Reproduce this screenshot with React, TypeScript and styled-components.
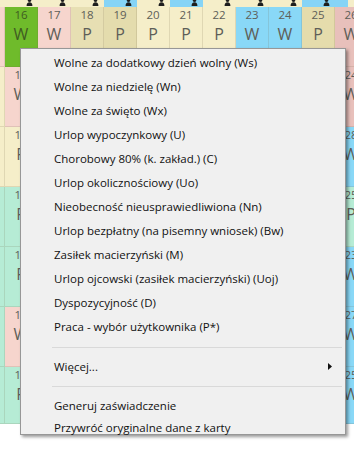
import React from 'react';
import styled, { createGlobalStyle } from 'styled-components';

const Global = createGlobalStyle`
  html, body { margin: 0; padding: 0; background: #ffffff; }
  body { width: 354px; height: 455px; overflow: hidden; font-family: "Open Sans", "Noto Sans", sans-serif; }
`;

const Stage = styled.div`
  position: relative;
  width: 354px;
  height: 455px;
  overflow: hidden;
  background: #ffffff;
`;

const Grid = styled.div`
  display: grid;
  grid-template-columns: 5px repeat(11, 33px);
  grid-template-rows: 7px repeat(6, 60px) 57px;
  width: 368px;
`;

const TopCell = styled.div<{ $bg: string }>`
  background: ${(p) => p.$bg};
  display: flex;
  justify-content: flex-end;
  align-items: flex-start;
  padding-right: 5px;
  overflow: hidden;
  box-sizing: border-box;
`;

const PersonIcon = styled.svg`
  width: 7px;
  height: 8px;
  margin-top: -2px;
  flex: none;
`;

const Cell = styled.div<{ $bg: string; $fg?: string }>`
  background: ${(p) => p.$bg};
  color: ${(p) => p.$fg ?? '#5e5e58'};
  border-right: 1px solid rgba(110, 100, 70, 0.16);
  border-bottom: 1px solid rgba(110, 100, 70, 0.16);
  box-sizing: border-box;
  display: flex;
  flex-direction: column;
  align-items: center;
  padding-top: 0;
  overflow: hidden;
  font-family: "Open Sans", "Noto Sans", sans-serif;
`;

const DayNum = styled.span`
  font-size: 11.5px;
  line-height: 16px;
  height: 16px;
`;

const DayCode = styled.span`
  font-size: 16px;
  line-height: 22px;
  height: 22px;
`;

const Menu = styled.div`
  position: absolute;
  left: 20px;
  top: 48px;
  width: 326px;
  box-sizing: border-box;
  background: #f0f0f0;
  border: 1px solid #979797;
  box-shadow: 2px 2px 3px rgba(0, 0, 0, 0.4);
  padding: 2px 2px 0 2px;
  font-family: "Open Sans", "Noto Sans", sans-serif;
  font-size: 11.5px;
  color: #111;
`;

const Item = styled.div<{ $h?: number }>`
  height: ${(p) => p.$h ?? 24}px;
  display: flex;
  align-items: flex-start;
  padding-left: 31px;
  padding-right: 11px;
  white-space: nowrap;
`;

const Label = styled.span`
  flex: 1;
  line-height: 24px;
`;

const Separator = styled.div<{ $h?: number }>`
  height: ${(p) => p.$h ?? 16}px;
  display: flex;
  align-items: center;
  padding-left: 29px;
  padding-right: 1px;
  &::after {
    content: '';
    flex: 1;
    height: 1px;
    background: #d9d9d9;
  }
`;

const Arrow = styled.svg`
  width: 4px;
  height: 7px;
  flex: none;
  margin-top: 8px;
`;

const PALE = '#f5eec9';
const TAN = '#e7dfb3';
const PINK = '#f6d5cd';
const PINK2 = '#e8c0bb';
const GREEN = '#6fbb2b';
const BLUE = '#89d8f7';
const TEAL = '#b6ecd5';
const TOPBLUE = '#86d4f6';

type Day = { n: string; c: string; bg: string; fg?: string };

const topStrip: { bg: string; icon: boolean }[] = [
  { bg: PALE, icon: false },
  { bg: PALE, icon: true },
  { bg: PALE, icon: true },
  { bg: PALE, icon: true },
  { bg: TOPBLUE, icon: true },
  { bg: PALE, icon: true },
  { bg: TOPBLUE, icon: true },
  { bg: PALE, icon: true },
  { bg: PALE, icon: true },
  { bg: PALE, icon: true },
  { bg: TOPBLUE, icon: true },
  { bg: `linear-gradient(to right, ${TOPBLUE} 13px, ${PALE} 13px)`, icon: true },
];

const headerRow: Day[] = [
  { n: '', c: '', bg: PINK },
  { n: '16', c: 'W', bg: GREEN, fg: '#3f5c22' },
  { n: '17', c: 'W', bg: PINK },
  { n: '18', c: 'P', bg: TAN },
  { n: '19', c: 'P', bg: '#e4dcad' },
  { n: '20', c: 'P', bg: PALE },
  { n: '21', c: 'P', bg: PALE },
  { n: '22', c: 'P', bg: PALE },
  { n: '23', c: 'W', bg: BLUE },
  { n: '24', c: 'W', bg: BLUE },
  { n: '25', c: 'P', bg: '#e5dcac' },
  { n: '26', c: 'W', bg: PINK2 },
];

const sideRows: { left: string; mid: Day; right: Day }[] = [
  { left: PALE, mid: { n: '17', c: 'W', bg: PINK }, right: { n: '24', c: 'W', bg: PINK2 } },
  { left: PALE, mid: { n: '18', c: 'P', bg: PALE }, right: { n: '28', c: 'W', bg: BLUE } },
  { left: TEAL, mid: { n: '19', c: 'P', bg: TEAL }, right: { n: '25', c: 'P', bg: TEAL } },
  { left: TEAL, mid: { n: '19', c: 'P', bg: TEAL }, right: { n: '23', c: 'W', bg: BLUE } },
  { left: TEAL, mid: { n: '17', c: 'W', bg: PINK }, right: { n: '27', c: 'W', bg: BLUE } },
  { left: TEAL, mid: { n: '18', c: 'P', bg: TEAL }, right: { n: '25', c: 'W', bg: BLUE } },
];

const items = [
  'Wolne za dodatkowy dzień wolny (Ws)',
  'Wolne za niedzielę (Wn)',
  'Wolne za święto (Wx)',
  'Urlop wypoczynkowy (U)',
  'Chorobowy 80% (k. zakład.) (C)',
  'Urlop okolicznościowy (Uo)',
  'Nieobecność nieusprawiedliwiona (Nn)',
  'Urlop bezpłatny (na pisemny wniosek) (Bw)',
  'Zasiłek macierzyński (M)',
  'Urlop ojcowski (zasiłek macierzyński) (Uoj)',
  'Dyspozycyjność (D)',
  'Praca - wybór użytkownika (P*)',
];

function Person() {
  return (
    <PersonIcon viewBox="0 0 7 8">
      <circle cx="3.5" cy="2" r="1.9" fill="#1e1e1e" />
      <path d="M0.6 8 Q0.6 4.3 3.5 4.3 Q6.4 4.3 6.4 8 Z" fill="#1e1e1e" />
    </PersonIcon>
  );
}

function DayCell({ d }: { d: Day }) {
  return (
    <Cell $bg={d.bg} $fg={d.fg}>
      <DayNum>{d.n}</DayNum>
      <DayCode>{d.c}</DayCode>
    </Cell>
  );
}

export default function App() {
  return (
    <Stage>
      <Global />
      <Grid>
        {topStrip.map((t, i) => (
          <TopCell key={`t${i}`} $bg={t.bg}>
            {t.icon && <Person />}
          </TopCell>
        ))}
        {headerRow.map((d, i) => (
          <DayCell key={`h${i}`} d={d} />
        ))}
        {sideRows.map((r, ri) => (
          <React.Fragment key={`r${ri}`}>
            <Cell $bg={r.left} />
            <DayCell d={r.mid} />
            {Array.from({ length: 9 }).map((_, k) => (
              <Cell key={k} $bg="#f0f0f0" />
            ))}
            <DayCell d={r.right} />
          </React.Fragment>
        ))}
      </Grid>
      <Menu>
        {items.map((t) => (
          <Item key={t}>
            <Label>{t}</Label>
          </Item>
        ))}
        <Separator />
        <Item>
          <Label>Więcej...</Label>
          <Arrow viewBox="0 0 4 7">
            <path d="M0 0 L4 3.5 L0 7 Z" fill="#111" />
          </Arrow>
        </Item>
        <Separator $h={15} />
        <Item $h={22}>
          <Label>Generuj zaświadczenie</Label>
        </Item>
        <Item $h={18}>
          <Label>Przywróć oryginalne dane z karty</Label>
        </Item>
      </Menu>
    </Stage>
  );
}
